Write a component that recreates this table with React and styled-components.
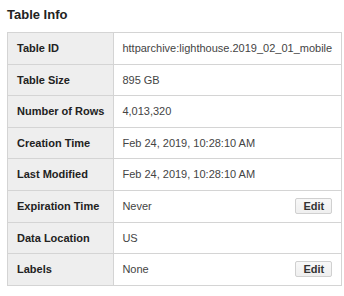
import React from "react";
import styled, { createGlobalStyle } from "styled-components";

const GlobalStyle = createGlobalStyle`
  body {
    margin: 0;
    background: #fff;
    font-family: Arial, "Liberation Sans", sans-serif;
  }
`;

const rows = [
  { label: "Table ID", value: "httparchive:lighthouse.2019_02_01_mobile" },
  { label: "Table Size", value: "895 GB" },
  { label: "Number of Rows", value: "4,013,320" },
  { label: "Creation Time", value: "Feb 24, 2019, 10:28:10 AM" },
  { label: "Last Modified", value: "Feb 24, 2019, 10:28:10 AM" },
  { label: "Expiration Time", value: "Never", editable: true },
  { label: "Data Location", value: "US" },
  { label: "Labels", value: "None", editable: true },
];

const Panel = styled.div`
  padding: 7px 7px 0 7px;
`;

const Title = styled.h2`
  margin: 0 0 10px 0;
  font-size: 13px;
  font-weight: bold;
  line-height: 15px;
  color: #222;
`;

const InfoTable = styled.table`
  width: 328px;
  border-collapse: collapse;
  font-size: 11px;
`;

const Cell = styled.td`
  border: 1px solid #d4d4d4;
  padding: 9px;
  line-height: 12.6px;
  white-space: nowrap;
`;

const LabelCell = styled(Cell)`
  width: 88px;
  background: #eeeeee;
  color: #222;
  font-weight: bold;
`;

const ValueCell = styled(Cell)`
  color: #444;
  padding-left: 8px;
`;

const ValueLine = styled.div`
  display: flex;
  align-items: center;
  justify-content: space-between;
  height: 12.6px;
`;

const EditButton = styled.button`
  margin: -2px 0;
  height: 16px;
  padding: 0 7px;
  border: 1px solid #d0d0d0;
  border-radius: 2px;
  background: linear-gradient(#f8f8f8, #efefef);
  color: #333;
  font-family: Arial, "Liberation Sans", sans-serif;
  font-size: 11px;
  font-weight: bold;
  line-height: 14px;
  cursor: pointer;
`;

const App = () => {
  return (
    <Panel>
      <GlobalStyle />
      <Title>Table Info</Title>
      <InfoTable>
        <tbody>
          {rows.map((row) => (
            <tr key={row.label}>
              <LabelCell>{row.label}</LabelCell>
              <ValueCell>
                <ValueLine>
                  <span>{row.value}</span>
                  {row.editable && <EditButton>Edit</EditButton>}
                </ValueLine>
              </ValueCell>
            </tr>
          ))}
        </tbody>
      </InfoTable>
    </Panel>
  );
};

export default App;
